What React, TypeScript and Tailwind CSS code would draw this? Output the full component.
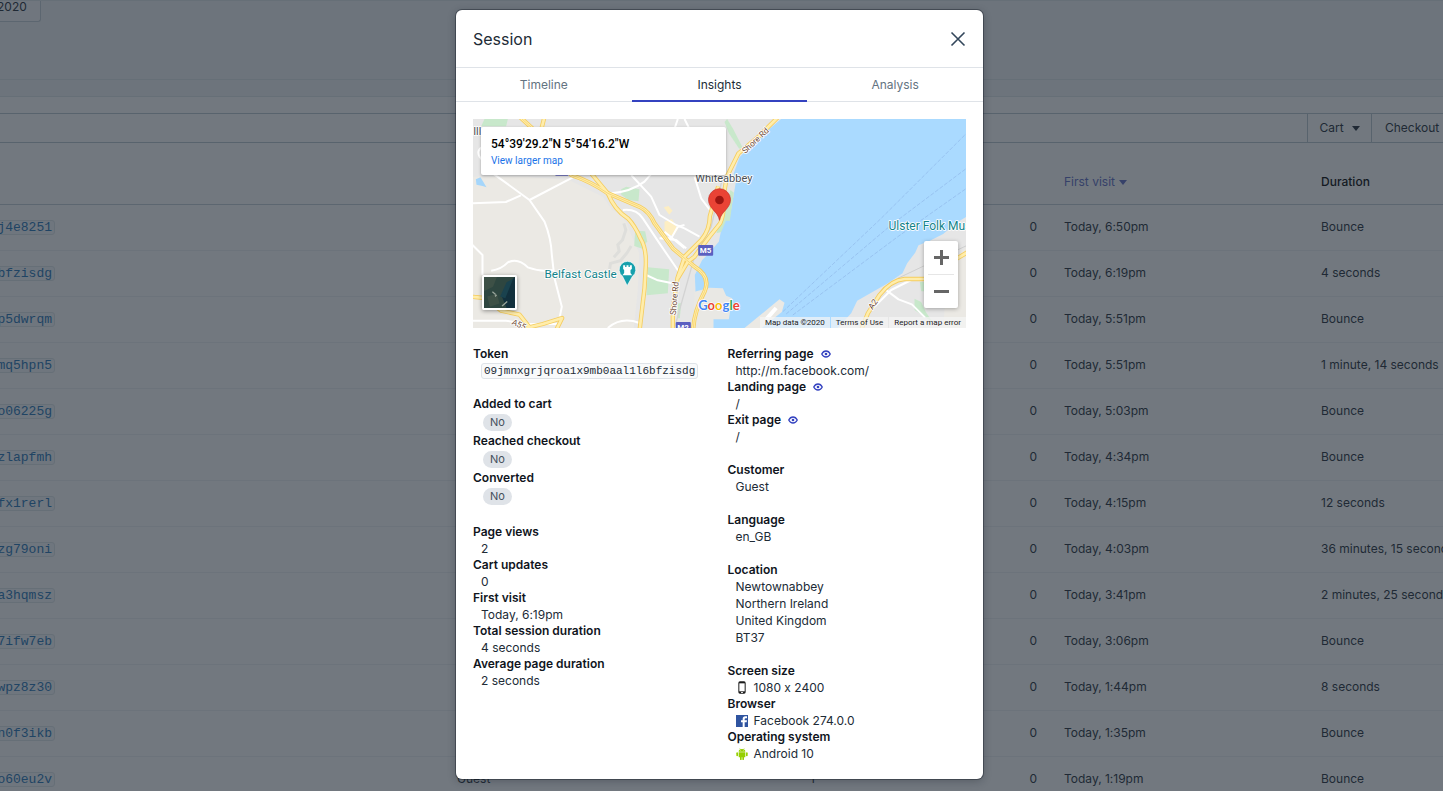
import type { ReactNode } from "react";

type Row = {
  token: string;
  time: string;
  duration: string;
  customer?: string;
  views?: string;
};

const rows: Row[] = [
  { token: "j4e8251", time: "Today, 6:50pm", duration: "Bounce" },
  { token: "bfzisdg", time: "Today, 6:19pm", duration: "4 seconds" },
  { token: "p5dwrqm", time: "Today, 5:51pm", duration: "Bounce" },
  { token: "mq5hpn5", time: "Today, 5:51pm", duration: "1 minute, 14 seconds" },
  { token: "o06225g", time: "Today, 5:03pm", duration: "Bounce" },
  { token: "zlapfmh", time: "Today, 4:34pm", duration: "Bounce" },
  { token: "fx1rerl", time: "Today, 4:15pm", duration: "12 seconds" },
  { token: "zg79oni", time: "Today, 4:03pm", duration: "36 minutes, 15 seconds" },
  { token: "a3hqmsz", time: "Today, 3:41pm", duration: "2 minutes, 25 seconds" },
  { token: "7ifw7eb", time: "Today, 3:06pm", duration: "Bounce" },
  { token: "wpz8z30", time: "Today, 1:44pm", duration: "8 seconds" },
  { token: "n0f3ikb", time: "Today, 1:35pm", duration: "Bounce" },
  { token: "o60eu2v", time: "Today, 1:19pm", duration: "Bounce", customer: "Guest", views: "1" },
];

const Caret = () => (
  <svg viewBox="0 0 8 5" className="h-[5px] w-2" fill="currentColor" aria-hidden="true">
    <path d="M0 0h8L4 5z" />
  </svg>
);

const EyeIcon = () => (
  <svg viewBox="0 0 20 16" className="h-2 w-[10px]" aria-hidden="true">
    <path d="M1.500 8C3.500 4 6.500 2 10 2s6.500 2 8.500 6c-2 4-5 6-8.500 6S3.500 12 1.500 8z" fill="none" stroke="currentColor" strokeWidth="2.600" />
    <circle cx="10" cy="8" r="2.600" fill="currentColor" />
  </svg>
);

const PhoneIcon = () => (
  <svg viewBox="0 0 24 39" className="h-[13px] w-2" aria-hidden="true">
    <rect x="1" y="1" width="22" height="37" rx="5" fill="#1b1b1b" />
    <rect x="4" y="7" width="16" height="24" fill="#fff" />
    <rect x="9" y="33" width="6" height="3" fill="#ddd" />
  </svg>
);

const FacebookIcon = () => (
  <svg viewBox="0 0 36 36" className="size-3" aria-hidden="true">
    <rect width="36" height="36" fill="#2f54a0" />
    <path d="M20 36V22h-5v-6h5v-4c0-5 3-8 8-8h5v6h-4c-2 0-3 1-3 3v3h7l-1 6h-6v14z" fill="#fff" />
  </svg>
);

const AndroidIcon = () => (
  <svg viewBox="0 0 36 36" className="size-3" fill="#95cf00" aria-hidden="true">
    <path d="M8 11a10 8 0 0 1 20 0z" />
    <path d="M11 1l3 4M25 1l-3 4" stroke="#95cf00" strokeWidth="1.500" />
    <path d="M8 13h20v13a2 2 0 0 1-2 2H10a2 2 0 0 1-2-2z" />
    <rect x="1" y="13" width="5" height="12" rx="2.500" />
    <rect x="30" y="13" width="5" height="12" rx="2.500" />
    <rect x="12" y="24" width="5" height="12" rx="2.500" />
    <rect x="19" y="24" width="5" height="12" rx="2.500" />
    <circle cx="14" cy="8" r="1" fill="#fff" />
    <circle cx="22" cy="8" r="1" fill="#fff" />
  </svg>
);

const greens = [
  "M60 27h70l-5 22H50z",
  "M470 238l15-8 40 8-3 36-30-4-22-16z",
  "M512 362l30 2 6 30-14 22-25-8z",
  "M550 472l64 6-4 72-64 6z",
  "M788 27l18 30 28 55-10 4-30-45-14-35z",
  "M640 580l10 0-4 45h-8z",
];

const sideRoads = [
  "M55 110q-20 10-10 30l40 50 110 80 45 65q20 50 22 100l8 70 22 85-6 30",
  "M195 270l130-68",
  "M24 280l100-4 45-20",
  "M24 405l30 30v60",
  "M80 482q30-4 50-25 30-15 60 15 40 15 75 8",
  "M24 632h100l60 10h100",
  "M440 250q60-5 100-35l60-70 40-118",
  "M500 195l60 65 25 55 50 30 25 10 45 25",
  "M690 200l20 65 30 40",
  "M585 385h35l20-35M585 385l50 5 30 25",
  "M600 365l60 50M640 350l20-5",
  "M475 300q40-5 60 25l50 75 65 95",
  "M545 495l35 16 40 8",
  "M430 654q40-35 95-15",
  "M660 27l40 80",
  "M1262 538l40 30 40 15 40 40",
  "M1220 600l60-60 60-30",
];

const mainRoads = [
  "M165 20l55 50 100 125q60 20 110 55l95 40q30 15 45 50l55 75 65 55q50 30 30 75-32 60-34 115",
  "M240 20l-15 60",
  "M380 190l50 60q20 50 60 75 20 20 38 60 18 30 16 80l-4 70-14 120",
  "M625 654v-60l14-90 22-65 50-50q25-30 25-70l25-90",
  "M640 505l30-50 20-15 45-60 32-40q14-30 10-80l10-60 35-70 60-50 70-70",
  "M20 560l40 4 50 38 55 12 40 50",
  "M185 654l50-12 58-18-18 36",
  "M1190 660l20-50 35-55q35-45 75-48h80",
  "M1470 450l50-30",
];

// terrain, roads and labels of the embedded map, three units to a pixel
const MapDrawing = () => (
  <svg
    viewBox="24 27 1482 627"
    preserveAspectRatio="xMidYMid slice"
    className="size-full"
    role="img"
    aria-label="Map"
    fontFamily="Roboto, sans-serif"
  >
    <rect x="24" y="27" width="1482" height="627" fill="#e6e6e6" />
    <path d="M24 200h160l130 10q60 30 100 50l30 40q40 20 50 60l30 70-4 110-12 114H24z" fill="#ebe9e4" />
    <path d="M478 340l6 20-10 30-14 14 4 20-16 18M500 408l-12 20-20 24-30 8-4 26" fill="none" stroke="#dededb" strokeWidth="9" />
    {greens.map((d) => (
      <path key={d} d={d} fill="#c8e8cb" />
    ))}
    <path d="M34 208l14-6 18 30-12-4-18-4z" fill="#a5d6fb" />
    <path d="M600 335l22-8 18 30-12 20-28-6zM598 292l14-4 12 14-10 12z" fill="#fdeec3" />
    {/* lough and harbour */}
    <path
      d="M950 27l-65 55-60 60-18 50 8 18-10 60-10 50-20 15-12 60-30 35-20 20-22 45 2 45-10 114H1506V27z"
      fill="#aadaff"
    />
    <path d="M798 240l10 8-12 84h-12l-14 34-14 4 20-70z" fill="#c8e8cb" />
    <path d="M690 545l45-12 40 2 10 22 18 8-10 63h-46v30h-64z" fill="#e9e8e4" />
    <path d="M840 654l105-86 15 10-8 28-60 48z" fill="#ebe9e4" />
    <path d="M905 628l30-34" stroke="#fff" strokeWidth="12" />
    <path d="M1120 654l40-44 18-38 50-28 42-24 44-30 14-30 24-32 10-22 34-14 40-20 40-34 30-18V654z" fill="#e6e6e6" />
    <path d="M1450 470l56-60v244h-70z" fill="#ebe9e4" />
    <path d="M1366 516h16v28h-12zM1350 566l20 10 14 30 20 30-54-36z" fill="#c8e8cb" />
    <path
      d="M955 605L1250 325 1506 70M965 612L1280 345 1506 175M985 615L1300 380 1506 235"
      fill="none"
      stroke="#8fb6e8"
      strokeWidth="2"
      strokeDasharray="12 5"
    />
    <g fill="none" stroke="#fff" strokeWidth="6" strokeLinejoin="round">
      {sideRoads.map((d) => (
        <path key={d} d={d} />
      ))}
    </g>
    <path d="M1300 505l206-98" fill="none" stroke="#cfcfcf" strokeWidth="3" />
    <path d="M775 200l-35 150-50 90-60 214" fill="none" stroke="#d3d3d3" strokeWidth="4" />
    <g fill="none" stroke="#f5cd5f" strokeWidth="13" strokeLinejoin="round">
      {mainRoads.map((d) => (
        <path key={d} d={d} />
      ))}
    </g>
    <g fill="none" stroke="#ffedab" strokeWidth="8" strokeLinejoin="round">
      {mainRoads.map((d) => (
        <path key={d} d={d} />
      ))}
    </g>
    <path d={mainRoads[0]} fill="none" stroke="#f5cd5f" strokeWidth="2" />
    <g fill="#5b5fc0">
      <rect x="272" y="170" width="40" height="27" rx="3" />
      <rect x="701" y="405" width="45" height="32" rx="3" />
      <rect x="634" y="636" width="45" height="30" rx="3" />
    </g>
    <g fill="#fff" fontSize="24" fontWeight="700" textAnchor="middle">
      <text x="723" y="430">M5</text>
      <text x="656" y="661">M2</text>
    </g>
    <g stroke="#fff" strokeWidth="5" strokeLinejoin="round" paintOrder="stroke">
      <text x="26" y="76" fontSize="32" fill="#4a4f55">Illu</text>
      <text x="692" y="217" fontSize="33" fill="#4a4f55">Whiteabbey</text>
      <g fill="#12838a">
        <text x="240" y="505" fontSize="35">Belfast Castle</text>
        <text x="1272" y="361" fontSize="36">Ulster Folk Museum</text>
      </g>
      <g fontSize="25" fill="#6f4a35">
        <text transform="translate(842 132) rotate(-43)">Shore Rd</text>
        <text transform="translate(634 616) rotate(-85)">Shore Rd</text>
        <text transform="translate(1224 600) rotate(-55)">A2</text>
        <text transform="translate(140 642) rotate(25)">A55</text>
      </g>
    </g>
    {/* castle marker */}
    <path d="M488 527l-14-28a25 25 0 1 1 30 0z" fill="#16a0ac" stroke="#fff" strokeWidth="2" />
    <path d="M476 466h6v5h4v-5h6v5h4v-5h6v11l-4 3v9l5 7h-29l5-7v-9l-3-3z" fill="#fff" />
    {/* session pin */}
    <path d="M765 331c-4-26-33-35-33-62a33 33 0 0 1 66 0c0 27-29 36-33 62z" fill="#ea4335" stroke="#c5302a" strokeWidth="2" />
    <circle cx="765" cy="270" r="13" fill="#9c1511" />
    <g fontFamily="Lato, sans-serif" fontSize="39" stroke="#fff" strokeWidth="4" paintOrder="stroke" fontWeight="700">
      <text x="701" y="601">
        <tspan fill="#4285f4">G</tspan>
        <tspan fill="#ea4335">o</tspan>
        <tspan fill="#fbbc05">o</tspan>
        <tspan fill="#4285f4">g</tspan>
        <tspan fill="#34a853">l</tspan>
        <tspan fill="#ea4335">e</tspan>
      </text>
    </g>
  </svg>
);

const SatelliteThumb = () => (
  <svg viewBox="0 0 96 96" className="size-full" aria-hidden="true">
    <rect width="96" height="96" fill="#2e4640" />
    <path d="M96 0v96H70L56 62 68 40 84 10z" fill="#12303d" />
    <path d="M0 0h40L28 30 0 44zM10 60l30-8 8 30-30 10z" fill="#3d5046" />
    <path d="M50 60l20-44 20-10-24 60z" fill="#1a424e" />
    <path d="M26 46l10 8M34 60l5-4M56 90l16-14" stroke="#9aa69c" strokeWidth="4" />
  </svg>
);

const Label = ({ children }: { children: ReactNode }) => (
  <dt className="flex h-4 items-center gap-[7px] font-semibold text-[#10151d]">{children}</dt>
);

const Value = ({ children }: { children: ReactNode }) => (
  <dd className="flex h-[17px] items-center gap-[6px] pl-2">{children}</dd>
);

const Flag = ({ label }: { label: string }) => (
  <>
    <Label>{label}</Label>
    <dd className="flex h-[21px] items-center pl-[10px]">
      <span className="rounded-full bg-[#dfe3e8] px-[7px] text-[11px] leading-[17px] text-[#454f5b]">No</span>
    </dd>
  </>
);

const PageLink = ({ label }: { label: string }) => (
  <Label>
    {label}
    <button type="button" className="text-[#3442c0]" aria-label={`View ${label.toLowerCase()}`}>
      <EyeIcon />
    </button>
  </Label>
);

const SessionsPage = () => (
  <div className="h-full overflow-hidden bg-white text-[#212b36]">
    <div className="flex h-20 items-start border-y border-[#dfe6ea] bg-[#f0f5f6]">
      <button type="button" className="-ml-2 h-[21px] rounded-b-[3px] border border-t-0 border-[#c4cdd5] bg-[#f9fafb] pr-[13px] pb-2 pl-1 leading-3">
        2020
      </button>
    </div>
    <div className="h-[17px] border-b border-[#dfe6ea] bg-[#f0f5f6]" />
    <div className="mt-4 flex h-[30px] border-y border-[#b9c5cd]">
      <input type="search" aria-label="Filter sessions" className="min-w-0 flex-1 bg-transparent" />
      <button type="button" className="flex w-16 shrink-0 items-center justify-center gap-2 border-l border-[#b9c5cd]">
        Cart <Caret />
      </button>
      <button type="button" className="w-[72px] shrink-0 border-l border-[#b9c5cd] pl-[13px] text-left">
        Checkout
      </button>
    </div>
    <table className="w-full table-fixed border-collapse text-left whitespace-nowrap">
      <thead>
        <tr className="h-[61px] border-b border-[#c4cdd5]">
          <th className="w-[457px]" />
          <th />
          <th className="w-[254px]" />
          <th className="w-[257px] p-0 pt-[18px] font-normal text-[#5c6ac4]">
            <button type="button" className="flex items-center gap-1">
              First visit <Caret />
            </button>
          </th>
          <th className="w-[122px] p-0 pt-[18px] font-medium text-black">Duration</th>
        </tr>
      </thead>
      <tbody>
        {rows.map((row) => (
          <tr key={row.token} className="h-[46px] border-b border-[#eff2f5]">
            <td className="p-0">
              <a href="#session" className="flex w-[55px] justify-end text-[#2272b5]">
                <code className="rounded-[3px] border border-[#dfe6ea] bg-[#f6f9fb] px-[2px] font-['Liberation_Mono',monospace] text-[13px] leading-[13px]">
                  {row.token}
                </code>
              </a>
            </td>
            <td className="p-0">{row.customer}</td>
            <td className="p-0">
              <div className="flex justify-between pr-[27px]">
                <span>{row.views}</span>
                <span>0</span>
              </div>
            </td>
            <td className="p-0">{row.time}</td>
            <td className="p-0">{row.duration}</td>
          </tr>
        ))}
      </tbody>
    </table>
  </div>
);

const SessionDialog = () => (
  <section
    role="dialog"
    aria-label="Session"
    className="w-[527px] max-w-full overflow-hidden rounded-md bg-white text-[#212b36] shadow-[0_0_0_1px_rgba(20,28,38,0.4),0_2px_8px_rgba(20,28,38,0.3)]"
  >
    <header className="flex h-[58px] items-center justify-between border-b border-[#dfe3e8] px-[17px]">
      <h1 className="text-base leading-6">Session</h1>
      <button type="button" aria-label="Close" className="text-[#33475b]">
        <svg viewBox="0 0 16 16" className="size-4" fill="none" stroke="currentColor" strokeWidth="1.600">
          <path d="M1.500 1.500l13 13M14.500 1.500l-13 13" />
        </svg>
      </button>
    </header>
    <nav className="grid h-[34px] grid-cols-3 border-b border-[#dfe3e8]">
      <button type="button" className="text-[#637381]">Timeline</button>
      <button type="button" className="-mb-px border-b-2 border-[#3442c0] pt-px">Insights</button>
      <button type="button" className="text-[#637381]">Analysis</button>
    </nav>
    <div className="px-[17px] py-[17px]">
      <div className="relative h-[209px] overflow-hidden font-['Roboto',sans-serif]">
        <MapDrawing />
        <div className="absolute top-2 left-2 h-12 w-[245px] rounded-[2px] bg-white px-[10px] pt-2 shadow-[0_1px_3px_rgba(0,0,0,0.3)]">
          <p className="text-[12px] leading-[18px] font-medium text-black">54°39'29.2"N 5°54'16.2"W</p>
          <a href="#map" className="block text-[10px] leading-4 text-[#1a73e8]">View larger map</a>
        </div>
        <button
          type="button"
          aria-label="Satellite view"
          className="absolute bottom-[18px] left-[9px] size-[35px] rounded-[2px] border-2 border-white shadow-[0_1px_4px_rgba(0,0,0,0.4)]"
        >
          <SatelliteThumb />
        </button>
        <div className="absolute right-2 bottom-5 flex w-[34px] flex-col rounded-[2px] bg-white px-1 text-[#666] shadow-[0_1px_4px_rgba(0,0,0,0.3)]">
          <button type="button" aria-label="Zoom in" className="flex h-[34px] items-center justify-center border-b border-[#e6e6e6]">
            <svg viewBox="0 0 15 15" className="size-[15px]" fill="currentColor">
              <path d="M6 0h3v6h6v3H9v6H6V9H0V6h6z" />
            </svg>
          </button>
          <button type="button" aria-label="Zoom out" className="flex h-[33px] items-center justify-center">
            <svg viewBox="0 0 15 15" className="size-[15px]" fill="currentColor">
              <path d="M0 6h15v3H0z" />
            </svg>
          </button>
        </div>
        <div className="absolute right-0 bottom-0 flex h-[11px] gap-px text-[8px] leading-[11px] text-[#222]">
          <span className="bg-[#f5f5f5]/70 px-[5px]">Map data ©2020</span>
          <a href="#terms" className="bg-[#f5f5f5]/70 px-[5px]">Terms of Use</a>
          <a href="#report" className="bg-[#f5f5f5]/70 px-[5px]">Report a map error</a>
        </div>
      </div>
      <div className="mt-[18px] grid grid-cols-2 gap-4">
        <div className="flex flex-col gap-[17px]">
          <dl>
            <Label>Token</Label>
            <Value>
              <code className="rounded-[3px] border border-[#dfe3e8] bg-[#f9fafb] px-[2px] font-['Liberation_Mono',monospace] text-[11px] leading-[14px]">
                09jmnxgrjqroa1x9mb0aal1l6bfzisdg
              </code>
            </Value>
          </dl>
          <dl>
            <Flag label="Added to cart" />
            <Flag label="Reached checkout" />
            <Flag label="Converted" />
          </dl>
          <dl>
            <Label>Page views</Label>
            <Value>2</Value>
            <Label>Cart updates</Label>
            <Value>0</Value>
            <Label>First visit</Label>
            <Value>Today, 6:19pm</Value>
            <Label>Total session duration</Label>
            <Value>4 seconds</Value>
            <Label>Average page duration</Label>
            <Value>2 seconds</Value>
          </dl>
        </div>
        <div className="flex flex-col gap-[17px]">
          <dl>
            <PageLink label="Referring page" />
            <Value>http://m.facebook.com/</Value>
            <PageLink label="Landing page" />
            <Value>/</Value>
            <PageLink label="Exit page" />
            <Value>/</Value>
          </dl>
          <dl>
            <Label>Customer</Label>
            <Value>Guest</Value>
          </dl>
          <dl>
            <Label>Language</Label>
            <Value>en_GB</Value>
          </dl>
          <dl>
            <Label>Location</Label>
            <Value>Newtownabbey</Value>
            <Value>Northern Ireland</Value>
            <Value>United Kingdom</Value>
            <Value>BT37</Value>
          </dl>
          <dl>
            <Label>Screen size</Label>
            <Value>
              <span className="flex w-3 justify-center"><PhoneIcon /></span>
              1080 x 2400
            </Value>
            <Label>Browser</Label>
            <Value>
              <FacebookIcon />
              Facebook 274.0.0
            </Value>
            <Label>Operating system</Label>
            <Value>
              <AndroidIcon />
              Android 10
            </Value>
          </dl>
        </div>
      </div>
    </div>
  </section>
);

const App = () => {
  return (
    <main className="relative h-screen overflow-hidden font-['Inter',sans-serif] text-[12px] [font-variant-ligatures:no-contextual]">
      <SessionsPage />
      <div className="absolute inset-0 flex items-start justify-center bg-[rgba(31,41,52,0.63)] pt-[10px] pr-1">
        <SessionDialog />
      </div>
    </main>
  );
};

export default App;
